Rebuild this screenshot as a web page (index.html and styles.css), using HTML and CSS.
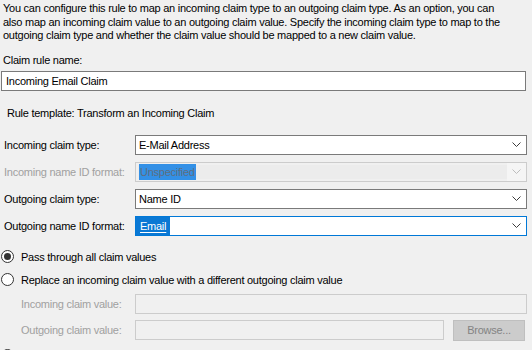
FILE: index.html
```html
<!DOCTYPE html>
<html lang="en">
<head>
  <meta charset="UTF-8" />
  <title>Edit Rule - Incoming Email Claim</title>
  <link rel="stylesheet" href="styles.css">
</head>
<body>
  <div class="dialog">
    <p class="intro">You can configure this rule to map an incoming claim type to an outgoing claim type. As an option, you can<br>also map an incoming claim value to an outgoing claim value. Specify the incoming claim type to map to the<br>outgoing claim type and whether the claim value should be mapped to a new claim value.</p>

    <div class="field-label">Claim rule name:</div>
    <div class="textbox rule-name">Incoming Email Claim</div>

    <div class="template">Rule template: Transform an Incoming Claim</div>

    <!-- claim type mapping -->
    <div class="claim-grid">
      <div class="grid-label">Incoming claim type:</div>
      <div class="combo">
        <div class="combo-value">E-Mail Address</div>
        <div class="combo-button"><svg class="chevron" viewBox="0 0 9 5"><polyline points="0.5,0.5 4.5,4.5 8.5,0.5" /></svg></div>
      </div>

      <div class="grid-label is-disabled">Incoming name ID format:</div>
      <div class="combo is-disabled">
        <div class="combo-value"><span class="selection">Unspecified</span></div>
        <div class="combo-button"><svg class="chevron" viewBox="0 0 9 5"><polyline points="0.5,0.5 4.5,4.5 8.5,0.5" /></svg></div>
      </div>

      <div class="grid-label">Outgoing claim type:</div>
      <div class="combo">
        <div class="combo-value">Name ID</div>
        <div class="combo-button"><svg class="chevron" viewBox="0 0 9 5"><polyline points="0.5,0.5 4.5,4.5 8.5,0.5" /></svg></div>
      </div>

      <div class="grid-label">Outgoing name ID format:</div>
      <div class="combo is-focused">
        <div class="combo-value"><span class="selection focus">Email</span></div>
        <div class="combo-button"><svg class="chevron" viewBox="0 0 9 5"><polyline points="0.5,0.5 4.5,4.5 8.5,0.5" /></svg></div>
      </div>
    </div>

    <!-- value options -->
    <div class="options">
      <div class="radio-row first"><span class="radio checked"></span>Pass through all claim values</div>
      <div class="radio-row"><span class="radio"></span>Replace an incoming claim value with a different outgoing claim value</div>

      <div class="value-grid">
        <div class="grid-label is-disabled">Incoming claim value:</div>
        <div class="textbox is-disabled"></div>

        <div class="grid-label is-disabled">Outgoing claim value:</div>
        <div class="value-browse">
          <div class="textbox is-disabled"></div>
          <button class="browse" disabled>Browse...</button>
        </div>
      </div>

      <!-- next option sits below the fold, only its button peeks in -->
      <div class="radio-row last"><span class="radio"></span></div>
    </div>
  </div>
</body>
</html>
```

FILE: styles.css
```css
* {
  box-sizing: border-box;
}

html, body {
  margin: 0;
  padding: 0;
  background-color: #f0f0f0;
  color: #000;
  height: 100%;
  overflow: hidden;
  font-family: 'Liberation Sans', Arial, sans-serif;
  font-size: 11px;
  letter-spacing: -0.25px;
}

.dialog {
  padding: 2px 6px 0 1px;
}

.intro {
  margin: 0;
  padding-left: 2px;
  line-height: 13.5px;
  white-space: nowrap;
}

.field-label {
  margin-top: 10px;
  padding-left: 2px;
  line-height: 14px;
}

.textbox {
  height: 20px;
  background-color: #fff;
  border: 1px solid #7a7a7a;
  padding: 0 4px;
  display: flex;
  align-items: center;
}

.textbox.is-disabled {
  background-color: #f0f0f0;
  border-color: #cccccc;
}

.rule-name {
  margin-top: 4px;
  width: 525px;
}

.template {
  margin-top: 15px;
  padding-left: 6px;
  line-height: 14px;
}

.claim-grid {
  margin-top: 15px;
  display: grid;
  grid-template-columns: 134px 392px;
  row-gap: 7px;
}

.grid-label {
  display: flex;
  align-items: center;
  padding-left: 3px;
}

.grid-label.is-disabled {
  color: #a0a0a0;
}

.combo {
  height: 20px;
  display: flex;
  background-color: #fff;
  border: 1px solid #7a7a7a;
}

.combo-value {
  flex: 1;
  display: flex;
  align-items: center;
  padding-left: 3px;
}

.combo-button {
  width: 19px;
  display: flex;
  align-items: center;
  justify-content: center;
}

.chevron {
  width: 9px;
  height: 5px;
  fill: none;
  stroke: #3c3c3c;
  stroke-width: 1;
}

.combo.is-disabled {
  border-color: #cccccc;
  background-color: #f0f0f0;
}

.combo.is-disabled .combo-value {
  margin: 2px 0 2px 2px;
  padding-left: 1px;
  background-color: #ececec;
}

.combo.is-disabled .combo-button {
  background-color: #f5f5f5;
}

.combo.is-disabled .chevron {
  stroke: #bdbdbd;
}

.combo.is-focused {
  border-color: #0078d7;
}

.selection {
  background-color: #3390e6;
  color: #5f6e80;
  padding: 1px 1px;
  line-height: 14px;
}

.selection.focus {
  align-self: stretch;
  display: flex;
  align-items: center;
  margin-left: -3px;
  padding: 0 4px;
  color: #fff;
  background-color: #0a78d4;
  text-decoration: underline;
  text-underline-offset: 2px;
}

.options {
  margin-top: 14px;
}

.radio-row {
  display: flex;
  align-items: center;
  gap: 7px;
  line-height: 14px;
  margin-top: 9px;
}

.radio-row.first {
  margin-top: 0;
}

.radio-row.last {
  margin-top: 8px;
}

.radio {
  width: 13px;
  height: 13px;
  border-radius: 50%;
  border: 1px solid #333;
  background-color: #fff;
  display: flex;
  align-items: center;
  justify-content: center;
}

.radio.checked::after {
  content: '';
  width: 7px;
  height: 7px;
  border-radius: 50%;
  background-color: #333;
}

.value-grid {
  margin-top: 7px;
  display: grid;
  grid-template-columns: 134px 392px;
  row-gap: 6px;
}

.value-grid .grid-label {
  padding-left: 20px;
}

.value-browse {
  display: flex;
  align-items: center;
  gap: 9px;
}

.value-browse .textbox {
  width: 309px;
}

.browse {
  width: 72px;
  height: 21px;
  font-family: inherit;
  font-size: 11px;
  letter-spacing: inherit;
  color: #838383;
  background-color: #cccccc;
  border: 1px solid #bfbfbf;
  padding: 0;
}
```
